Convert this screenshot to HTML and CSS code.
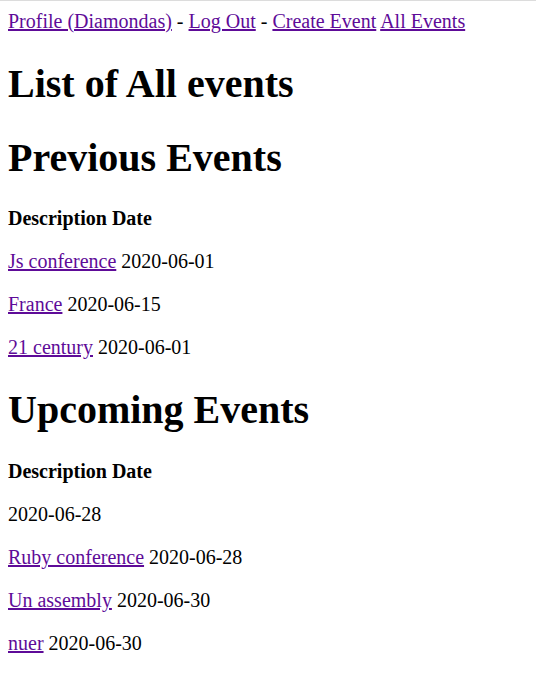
FILE: index.html
```html
<!DOCTYPE html>
<html>
<head>
<meta charset="utf-8">
<title>Events</title>
<link rel="stylesheet" href="styles.css">
</head>
<body>
<nav class="nav"><a href="#">Profile (Diamondas)</a> - <a href="#">Log Out</a> - <a href="#">Create Event</a> <a href="#">All Events</a></nav>
<h1 class="title">List of All events</h1>
<h1 class="title">Previous Events</h1>
<p class="head"><strong>Description Date</strong></p>
<p class="row"><a href="#">Js conference</a> 2020-06-01</p>
<p class="row"><a href="#">France</a> 2020-06-15</p>
<p class="row"><a href="#">21 century</a> 2020-06-01</p>
<h1 class="title">Upcoming Events</h1>
<p class="head"><strong>Description Date</strong></p>
<p class="row"> 2020-06-28</p>
<p class="row"><a href="#">Ruby conference</a> 2020-06-28</p>
<p class="row"><a href="#">Un assembly</a> 2020-06-30</p>
<p class="row"><a href="#">nuer</a> 2020-06-30</p>
</body>
</html>
```
FILE: styles.css
```css
html {
  border-top: 1px solid #dcdcdc;
}
body {
  margin: 9px 8px 8px;
  font-family: "Liberation Serif", "Times New Roman", serif;
  font-size: 20px;
  color: #000;
  background: #fff;
}
a {
  color: #5e0b98;
}
.title {
  font-size: 40px;
  margin: 0.67em 0;
}
.head, .row {
  margin: 1em 0;
}
```
